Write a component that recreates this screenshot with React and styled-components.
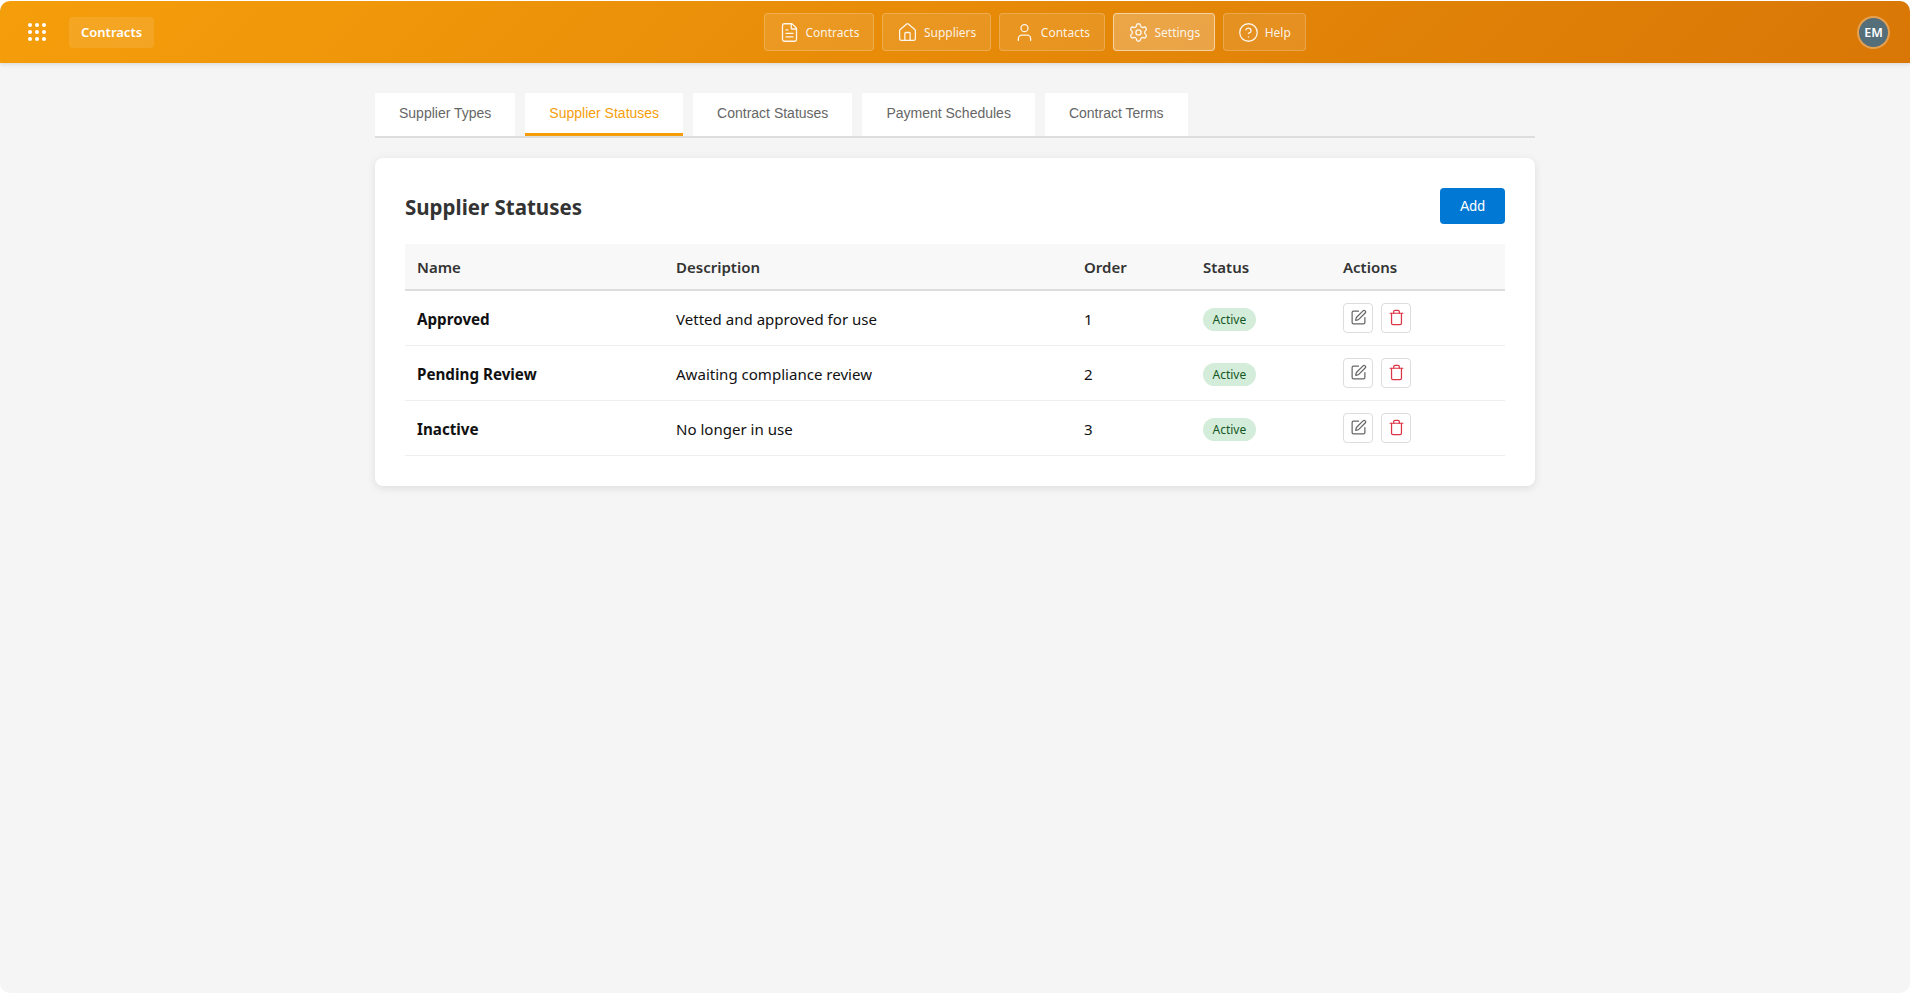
import React from "react";
import styled, { createGlobalStyle } from "styled-components";
import { FileText, House, User, Settings, CircleHelp, SquarePen, Trash } from "lucide-react";

const GlobalStyle = createGlobalStyle`
  html, body {
    margin: 0;
    padding: 0;
    background: #fff;
    font-family: "Noto Sans", "Open Sans", sans-serif;
  }
  * { box-sizing: border-box; }
`;

const Page = styled.div`
  margin-top: 1px;
  height: 992px;
  background: #f5f5f5;
  border-radius: 10px;
  overflow: hidden;
`;

const TopBar = styled.header`
  height: 62px;
  display: grid;
  grid-template-columns: 736px auto 1fr;
  align-items: center;
  padding: 0 20px 0 28px;
  background: linear-gradient(135deg, #f59e0b, #d97706);
  box-shadow: 0 2px 4px rgba(0, 0, 0, 0.1);
`;

const Brand = styled.div`
  display: flex;
  align-items: center;
  gap: 23px;
`;

const AppName = styled.div`
  height: 31px;
  padding: 0 12px;
  display: flex;
  align-items: center;
  border-radius: 4px;
  background: rgba(255, 255, 255, 0.1);
  color: #fff;
  font-size: 13px;
  font-weight: 600;
`;

const Nav = styled.nav`
  display: flex;
  gap: 8px;
`;

const NavButton = styled.button`
  height: 38px;
  padding: 0 14px;
  display: flex;
  align-items: center;
  gap: 5.5px;
  border-radius: 4px;
  border: 1px solid ${(p) => (p.$active ? "rgba(255,255,255,0.5)" : "rgba(255,255,255,0.2)")};
  background: ${(p) => (p.$active ? "rgba(255,255,255,0.25)" : "rgba(255,255,255,0.1)")};
  color: rgba(255, 255, 255, 0.9);
  font-family: inherit;
  font-size: 12px;
`;

const Avatar = styled.div`
  justify-self: end;
  width: 33px;
  height: 33px;
  display: flex;
  align-items: center;
  justify-content: center;
  border-radius: 50%;
  border: 2px solid rgba(255, 255, 255, 0.3);
  background: #546e7a;
  background-clip: padding-box;
  color: #fff;
  font-size: 12.5px;
  font-weight: 600;
`;

const Main = styled.main`
  width: 1160px;
  margin: 30px auto 0 375px;
`;

const Tabs = styled.div`
  display: flex;
  gap: 10px;
  border-bottom: 2px solid #ddd;
  margin-bottom: 20px;
`;

const Tab = styled.button`
  height: 43px;
  padding: 0 24px;
  border: none;
  border-bottom: 3px solid ${(p) => (p.$active ? "#f59e0b" : "transparent")};
  background: #fff;
  color: ${(p) => (p.$active ? "#f59e0b" : "#666")};
  font-family: "Liberation Sans", Arial, sans-serif;
  font-size: 14px;
`;

const Card = styled.section`
  padding: 30px;
  background: #fff;
  border-radius: 8px;
  box-shadow: 0 2px 8px rgba(0, 0, 0, 0.1);
`;

const CardHeader = styled.div`
  display: flex;
  justify-content: space-between;
  align-items: center;
  margin-bottom: 20px;
`;

const Title = styled.h2`
  margin: 1px 0 0;
  color: #333;
  font-size: 20.5px;
  font-weight: 700;
`;

const AddButton = styled.button`
  width: 65px;
  height: 36px;
  border: none;
  border-radius: 4px;
  background: #0078d4;
  color: #fff;
  font-family: "Liberation Sans", Arial, sans-serif;
  font-size: 14px;
  font-weight: 500;
`;

const Table = styled.table`
  width: 100%;
  table-layout: fixed;
  border-collapse: collapse;
  font-size: 15px;
`;

const Th = styled.th`
  height: 46px;
  width: ${(p) => p.$width}px;
  padding: 0 12px;
  text-align: left;
  background: #f8f8f8;
  border-bottom: 2px solid #ddd;
  color: #333;
  font-weight: 600;
`;

const Td = styled.td`
  height: 55px;
  padding: 2px 12px 0;
  border-bottom: 1px solid #eee;
  color: #111;
  font-size: ${(p) => (p.$strong ? "15.2px" : "15.05px")};
  font-weight: ${(p) => (p.$strong ? 700 : 400)};
`;

const Badge = styled.span`
  display: inline-block;
  vertical-align: -1px;
  padding: 3px 9.5px;
  border-radius: 12px;
  background: #d4edda;
  color: #155724;
  font-size: 12px;
  line-height: 17px;
`;

const Actions = styled.div`
  display: flex;
  gap: 8px;
  margin-top: -2px;
`;

const IconButton = styled.button`
  width: 30px;
  height: 30px;
  padding: 0;
  display: flex;
  align-items: center;
  justify-content: center;
  border: 1px solid #ddd;
  border-radius: 4px;
  background: #fff;
  color: ${(p) => (p.$danger ? "#dc3545" : "#666")};
`;

const navItems = [
  { label: "Contracts", icon: FileText },
  { label: "Suppliers", icon: House },
  { label: "Contacts", icon: User },
  { label: "Settings", icon: Settings, active: true },
  { label: "Help", icon: CircleHelp },
];

const tabs = ["Supplier Types", "Supplier Statuses", "Contract Statuses", "Payment Schedules", "Contract Terms"];

const rows = [
  { name: "Approved", description: "Vetted and approved for use", order: 1 },
  { name: "Pending Review", description: "Awaiting compliance review", order: 2 },
  { name: "Inactive", description: "No longer in use", order: 3 },
];

const Waffle = () => (
  <svg width="18" height="18" viewBox="0 0 18 18" fill="#fff">
    {[2, 9, 16].map((y) =>
      [2, 9, 16].map((x) => <circle key={`${x}-${y}`} cx={x} cy={y} r="2" />)
    )}
  </svg>
);

export default function App() {
  return (
    <>
      <GlobalStyle />
      <Page>
        <TopBar>
          <Brand>
            <Waffle />
            <AppName>Contracts</AppName>
          </Brand>
          <Nav>
            {navItems.map(({ label, icon: Icon, active }) => (
              <NavButton key={label} $active={active}>
                <Icon size={21} strokeWidth={1.5} />
                {label}
              </NavButton>
            ))}
          </Nav>
          <Avatar>EM</Avatar>
        </TopBar>
        <Main>
          <Tabs>
            {tabs.map((t) => (
              <Tab key={t} $active={t === "Supplier Statuses"}>{t}</Tab>
            ))}
          </Tabs>
          <Card>
            <CardHeader>
              <Title>Supplier Statuses</Title>
              <AddButton>Add</AddButton>
            </CardHeader>
            <Table>
              <thead>
                <tr>
                  <Th $width={259}>Name</Th>
                  <Th $width={408}>Description</Th>
                  <Th $width={119}>Order</Th>
                  <Th $width={140}>Status</Th>
                  <Th $width={174}>Actions</Th>
                </tr>
              </thead>
              <tbody>
                {rows.map((r) => (
                  <tr key={r.name}>
                    <Td $strong>{r.name}</Td>
                    <Td>{r.description}</Td>
                    <Td>{r.order}</Td>
                    <Td><Badge>Active</Badge></Td>
                    <Td>
                      <Actions>
                        <IconButton><SquarePen size={17} strokeWidth={1.75} /></IconButton>
                        <IconButton $danger><Trash size={17} strokeWidth={1.75} /></IconButton>
                      </Actions>
                    </Td>
                  </tr>
                ))}
              </tbody>
            </Table>
          </Card>
        </Main>
      </Page>
    </>
  );
}
